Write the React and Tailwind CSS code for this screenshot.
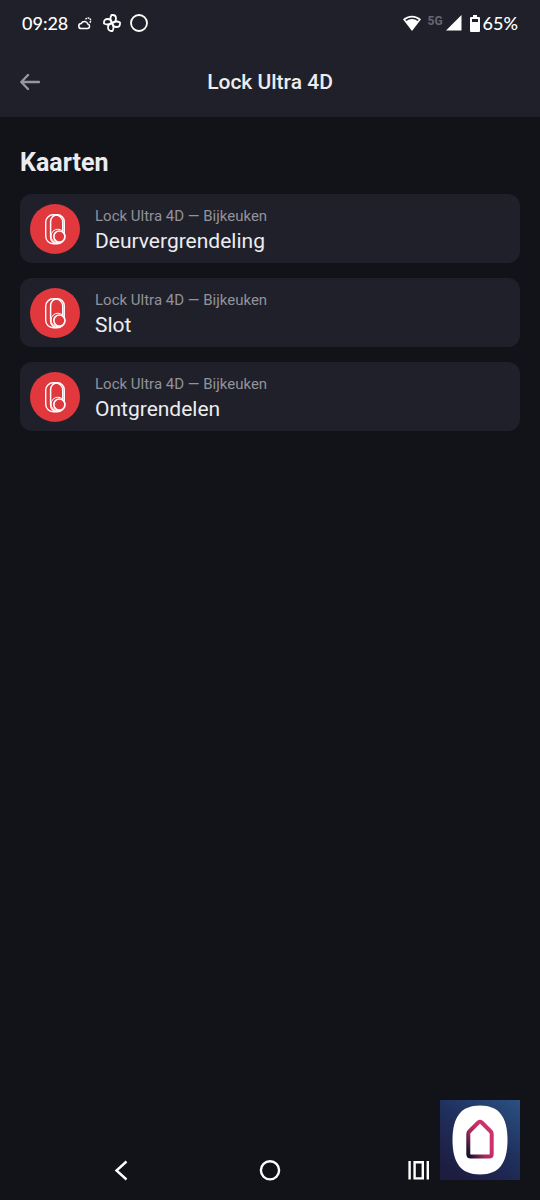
import React from 'react';

const flowCards = [
    { id: 'lock', device: 'Lock Ultra 4D — Bijkeuken', name: 'Deurvergrendeling' },
    { id: 'slot', device: 'Lock Ultra 4D — Bijkeuken', name: 'Slot' },
    { id: 'unlock', device: 'Lock Ultra 4D — Bijkeuken', name: 'Ontgrendelen' },
];

const LockIcon = () => (
    <svg className="h-[50px] w-[50px]" viewBox="0 0 50 50" fill="none" stroke="#fff" aria-hidden="true">
        <rect x="15.7" y="10.7" width="17" height="29" rx="7.5" strokeWidth="1.4" />
        <rect x="20.6" y="10.700" width="13.600" height="29" rx="6.800" strokeWidth="1.5" />
        <circle cx="27.900" cy="32" r="6.800" fill="#e0383c" strokeWidth="1" />
        <circle cx="29.400" cy="32.600" r="5.600" fill="#e0383c" strokeWidth="1.700" />
    </svg>
);

const StatusBar = () => (
    <div className="flex h-[46px] items-center justify-between px-[22px] font-['Lato',sans-serif] text-[18px] font-medium text-white">
        <div className="flex items-center">
            <span className="w-[56px]">09:28</span>
            {/* Weather */}
            <svg className="h-[14px] w-[14px]" viewBox="0 0 14 14" fill="none" stroke="#fff" strokeWidth="1.5" aria-hidden="true">
                <path d="M3.5 12.600a2.600 2.600 0 0 1-.2-5.200 3.500 3.500 0 0 1 6.500.7 2.300 2.300 0 0 1-.1 4.500z" />
                <path d="M7.600 3.400a2.700 2.700 0 1 1 4 3.400" strokeDasharray="1.800 0.700" />
            </svg>
            {/* Pinwheel */}
            <svg className="ml-[11px] h-[18px] w-[18px]" viewBox="0 0 18 18" fill="none" stroke="#fff" strokeWidth="1.8" strokeLinejoin="round" aria-hidden="true">
                <path d="M9 9C7.400 6.500 7.300 3 8.500 1h1.200c2 0 3.300 1.500 3.300 3.500C13 7 11 8.600 9 9z" />
                <path d="M9 9c2.500-1.600 6-1.700 8-.5v1.200c0 2-1.500 3.300-3.500 3.300C11 13 9.400 11 9 9z" />
                <path d="M9 9c1.600 2.500 1.700 6 .5 8H8.300C6.300 17 5 15.500 5 13.500 5 11 7 9.400 9 9z" />
                <path d="M9 9c-2.500 1.600-6 1.700-8 .5V8.300C1 6.300 2.500 5 4.500 5 7 5 8.600 7 9 9z" />
            </svg>
            <svg className="ml-[9px] h-[18px] w-[18px]" viewBox="0 0 18 18" fill="none" stroke="#fff" strokeWidth="1.8" aria-hidden="true">
                <circle cx="9" cy="9" r="8" />
            </svg>
        </div>
        <div className="flex items-center">
            {/* Wifi */}
            <svg className="h-4 w-[18px]" viewBox="0 0 18 16" aria-hidden="true">
                <path d="M0 4.2a13.2 13.2 0 0 1 18 0L9 16z" fill="#fff" />
                <path d="M2.8 5.4a9.6 9.6 0 0 1 12.4 0" fill="none" stroke="#20202a" strokeWidth="1.5" />
            </svg>
            <span className="ml-[7px] -mt-1 font-['Roboto',sans-serif] text-[12px] font-bold text-[#66666e]">5G</span>
            <svg className="ml-[3px] h-4 w-4" viewBox="0 0 16 16" fill="#fff" aria-hidden="true">
                <path d="M15.5 0v15.5H0z" />
            </svg>
            {/* Battery */}
            <svg className="ml-2 mr-[3px] h-[17px] w-[10px]" viewBox="0 0 10 17" aria-hidden="true">
                <path d="M3 0h4v2h2a1 1 0 0 1 1 1v13a1 1 0 0 1-1 1H1a1 1 0 0 1-1-1V3a1 1 0 0 1 1-1h2z" fill="#fff" />
                <path d="M2 4h6v3H2z" fill="#20202a" />
            </svg>
            <span>65%</span>
        </div>
    </div>
);

const Header = () => (
    <header className="bg-[#20202a]">
        <StatusBar />
        <div className="grid h-[71px] grid-cols-[40px_1fr_40px] items-center px-5">
            <button type="button" aria-label="Terug" className="cursor-pointer">
                <svg className="h-[18px] w-5" viewBox="0 0 20 18" fill="none" stroke="#9696a0" strokeWidth="2.4" strokeLinecap="round" strokeLinejoin="round" aria-hidden="true">
                    <path d="M19 9H1.5M8 2 1.3 9 8 16" />
                </svg>
            </button>
            <h1 className="pt-0.5 text-center text-[21px] font-medium">Lock Ultra 4D</h1>
        </div>
    </header>
);

const FlowCard = ({ device, name }) => (
    <li>
        <button type="button" className="flex h-[69px] w-full cursor-pointer items-center gap-[15px] rounded-xl bg-[#20202a] px-[10px] text-left">
            <span className="shrink-0 rounded-full bg-[#e0383c]">
                <LockIcon />
            </span>
            <span className="flex min-w-0 flex-col pt-1">
                <span className="text-[15px] leading-5 text-[#92929b]">{device}</span>
                <span className="text-[21px] leading-[30px]">{name}</span>
            </span>
        </button>
    </li>
);

const NavigationBar = () => (
    <nav className="flex h-[60px] items-center justify-center gap-[125px]">
        <button type="button" aria-label="Vorige" className="cursor-pointer">
            <svg className="h-6 w-6" viewBox="0 0 24 24" fill="none" stroke="#fff" strokeWidth="2.4" aria-hidden="true">
                <path d="M17.5 3.5 7.5 12.5l10 9" />
            </svg>
        </button>
        <button type="button" aria-label="Startscherm" className="cursor-pointer">
            <svg className="h-6 w-6" viewBox="0 0 24 24" fill="none" stroke="#fff" strokeWidth="2.4" aria-hidden="true">
                <circle cx="12" cy="12.3" r="9.1" />
            </svg>
        </button>
        <button type="button" aria-label="Recente apps" className="cursor-pointer">
            <svg className="h-6 w-6" viewBox="0 0 24 24" fill="none" stroke="#fff" strokeWidth="2.4" aria-hidden="true">
                <path d="M2.6 3v18.6M20.800 3v18.6M7.6 4.2h8.200v16.2H7.6z" />
            </svg>
        </button>
    </nav>
);

const AppBadge = () => (
    <svg className="absolute right-5 bottom-5 h-20 w-20" viewBox="0 0 80 80" role="img" aria-label="Homey">
        <defs>
            <linearGradient id="tile" x1="1" y1="0" x2="0.3" y2="1">
                <stop offset="0" stopColor="#2a5282" />
                <stop offset="0.5" stopColor="#20305e" />
                <stop offset="1" stopColor="#1d1d42" />
            </linearGradient>
            <linearGradient id="house" x1="0.75" y1="0.45" x2="0.1" y2="1">
                <stop offset="0" stopColor="#d0316a" />
                <stop offset="0.5" stopColor="#a02a5c" />
                <stop offset="1" stopColor="#1c1230" />
            </linearGradient>
        </defs>
        <rect width="80" height="80" fill="url(#tile)" />
        <path d="M40 5.5C59 5.5 67.5 17 67.5 40S59 74.5 40 74.5 12.5 63 12.5 40 21 5.5 40 5.5z" fill="#fff" />
        <path d="M38.3 22.5 29.3 31.5Q28.3 32.5 28.3 34V54Q28.3 56.5 30.8 56.5H49.2Q51.7 56.5 51.7 54V34Q51.7 32.5 50.7 31.5L41.7 22.5Q40 21 38.3 22.5z" fill="none" stroke="url(#house)" strokeWidth="4" strokeLinejoin="round" />
    </svg>
);

const App = () => {
    return (
        <div className="relative flex min-h-screen flex-col bg-[#121318] font-['Roboto',sans-serif] text-[#ececf0]">
            <Header />
            <main className="flex-1 px-5 pt-[31px]">
                <h2 className="text-[25px] leading-[30px] font-bold">Kaarten</h2>
                <ul className="mt-4 flex flex-col gap-[15px]">
                    {flowCards.map((card) => (
                        <FlowCard key={card.id} device={card.device} name={card.name} />
                    ))}
                </ul>
            </main>
            <NavigationBar />
            <AppBadge />
        </div>
    );
};

export default App;
